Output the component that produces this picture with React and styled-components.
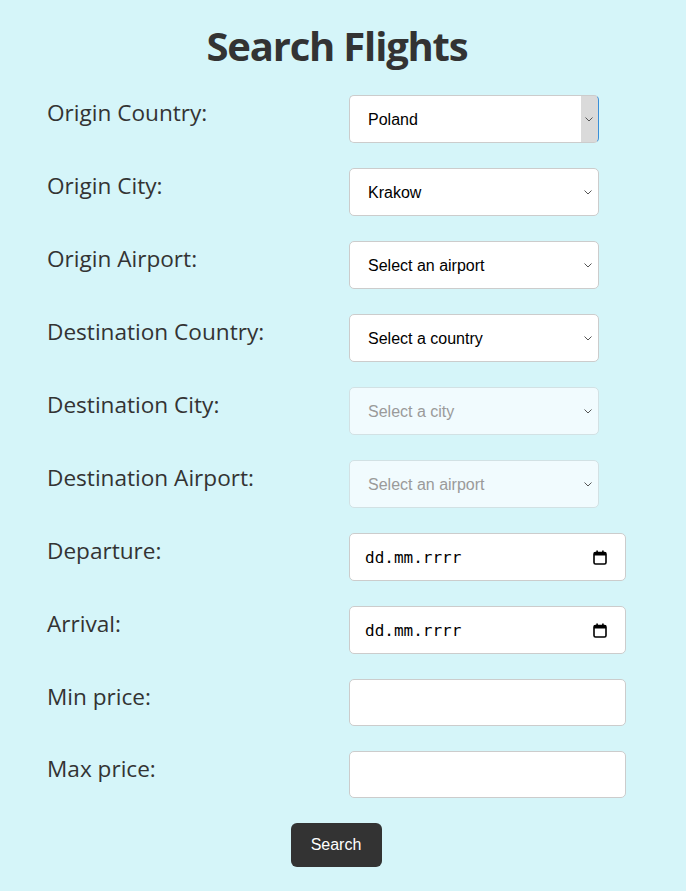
import React from 'react'
import styled, { createGlobalStyle } from 'styled-components'

const GlobalStyle = createGlobalStyle`
    body {
        margin: 0;
        background: #d5f5f9;
        font-family: "Open Sans", "Noto Sans", sans-serif;
    }
`;

const Page = styled.div`
    min-height: 891px;
    display: flex;
    flex-direction: column;
    align-items: center;
`;

const Title = styled.h1`
    margin: 19px 0 22px;
    font-size: 40px;
    font-weight: 700;
    line-height: 54px;
    letter-spacing: -1.2px;
    color: #333;
    transform: translateX(-6px);
`;

const Form = styled.form`
    width: 100%;
    box-sizing: border-box;
    padding-left: 47px;
    display: grid;
    grid-template-columns: 302px 277px;
    row-gap: 25px;
`;

const Label = styled.label`
    font-size: 22.6px;
    color: #333;
    padding-top: 3px;
    line-height: 30px;
`;

const chevron = encodeURIComponent(
    '<svg xmlns="http://www.w3.org/2000/svg" width="8" height="5" viewBox="0 0 8 5"><path d="M0.5 0.5 L4 4 L7.5 0.5" fill="none" stroke="#555" stroke-width="1"/></svg>'
);

const Select = styled.select`
    appearance: none;
    width: 250px;
    height: 48px;
    box-sizing: border-box;
    padding: 0 18px;
    border: 1px solid #ccc;
    border-radius: 5px;
    font-family: "Liberation Sans", Arial, sans-serif;
    font-size: 16px;
    color: #000;
    background-color: #fff;
    background-image: url("data:image/svg+xml,${chevron}");
    background-repeat: no-repeat;
    background-position: right 6px center;
    outline: none;

    &:disabled {
        opacity: 1;
        color: #9a9a9a;
        background-color: #f1fbfe;
        border-color: #d2e1e4;
    }

    ${({ $focused }) => $focused && `
        border-right: 1px solid #3b8fd8;
        background-image: url("data:image/svg+xml,${chevron}"), linear-gradient(#dadada, #dadada);
        background-size: auto, 17px 100%;
        background-position: right 5px center, right 0 center;
    `}
`;

const DateBox = styled.div`
    width: 277px;
    height: 48px;
    box-sizing: border-box;
    padding: 0 18px 0 15px;
    border: 1px solid #ccc;
    border-radius: 5px;
    background: #fff;
    display: flex;
    align-items: center;
    justify-content: space-between;
    font-family: "DejaVu Sans Mono", "Liberation Mono", monospace;
    font-size: 16px;
    color: #000;
`;

const Input = styled.input`
    width: 277px;
    height: 47px;
    box-sizing: border-box;
    border: 1px solid #ccc;
    border-radius: 5px;
    background: #fff;
    padding: 0 15px;
    font-size: 16px;
    outline: none;
`;

const Button = styled.button`
    margin-top: 25px;
    width: 91px;
    height: 44px;
    border: 0;
    border-radius: 6px;
    background: #333;
    color: #fff;
    font-family: "Liberation Sans", Arial, sans-serif;
    font-size: 16px;
    cursor: pointer;
    transform: translateX(-7px);
`;

function CalendarIcon() {
    return (
        <svg width="14" height="15" viewBox="0 0 14 15">
            <rect x="1" y="2.5" width="12" height="11.5" rx="1.5" fill="none" stroke="#000" strokeWidth="1.6" />
            <rect x="1" y="2.5" width="12" height="3" fill="#000" />
            <rect x="3.3" y="0.5" width="1.6" height="3" fill="#000" />
            <rect x="9.1" y="0.5" width="1.6" height="3" fill="#000" />
        </svg>
    );
}

function DateField() {
    return (
        <DateBox>
            <span>dd.mm.rrrr</span>
            <CalendarIcon />
        </DateBox>
    );
}

export default function App() {
    return (
        <Page>
            <GlobalStyle />
            <Title>Search Flights</Title>
            <Form onSubmit={(e) => e.preventDefault()}>
                <Label>Origin Country:</Label>
                <Select $focused defaultValue="pl"><option value="pl">Poland</option></Select>

                <Label>Origin City:</Label>
                <Select defaultValue="krk"><option value="krk">Krakow</option></Select>

                <Label>Origin Airport:</Label>
                <Select><option>Select an airport</option></Select>

                <Label>Destination Country:</Label>
                <Select><option>Select a country</option></Select>

                <Label>Destination City:</Label>
                <Select disabled><option>Select a city</option></Select>

                <Label>Destination Airport:</Label>
                <Select disabled><option>Select an airport</option></Select>

                <Label>Departure:</Label>
                <DateField />

                <Label>Arrival:</Label>
                <DateField />

                <Label>Min price:</Label>
                <Input type="text" />

                <Label>Max price:</Label>
                <Input type="text" />
            </Form>
            <Button type="submit">Search</Button>
        </Page>
    )
}
